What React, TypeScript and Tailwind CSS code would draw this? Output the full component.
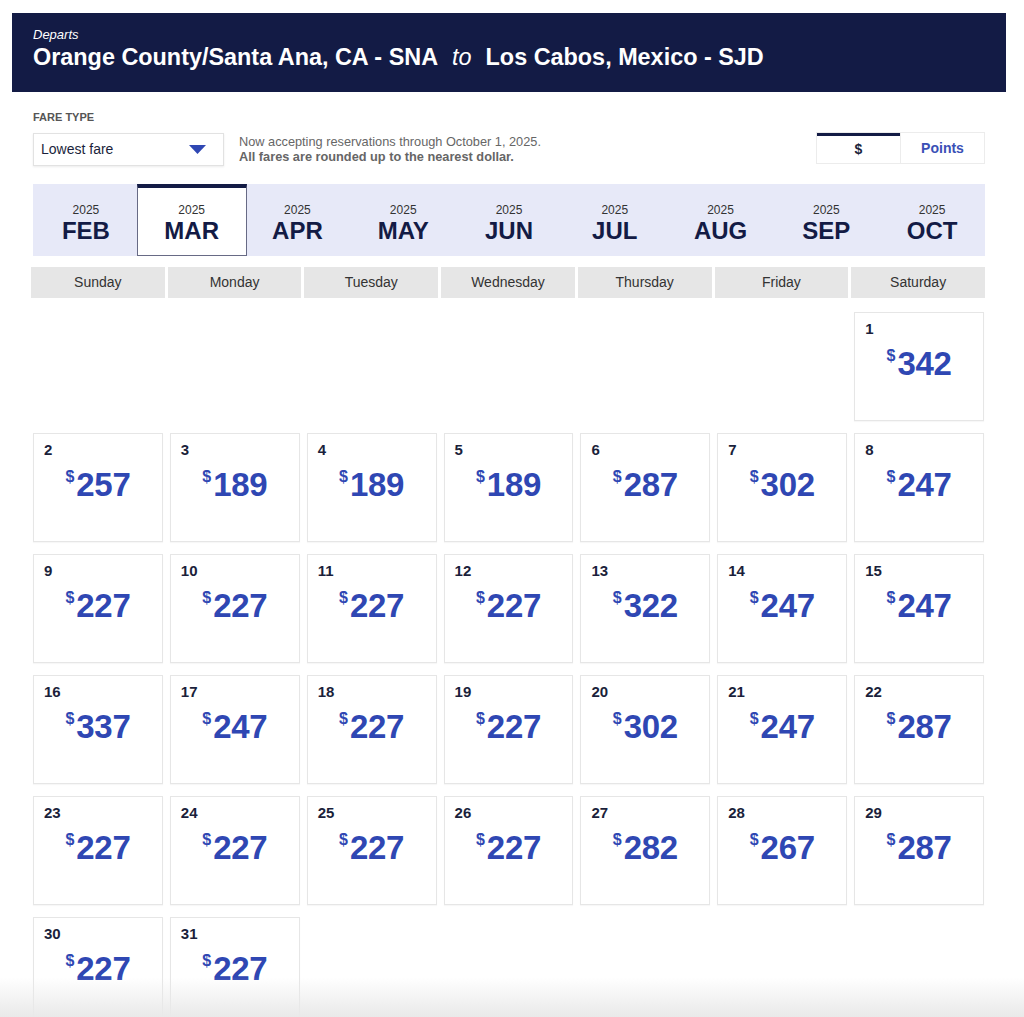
import React from "react";

const months = ["FEB", "MAR", "APR", "MAY", "JUN", "JUL", "AUG", "SEP", "OCT"];
const days = ["Sunday", "Monday", "Tuesday", "Wednesday", "Thursday", "Friday", "Saturday"];

// March 2025 fares, index = day - 1
const fares = [
  342, 257, 189, 189, 189, 287, 302, 247, 227, 227, 227, 227, 322, 247, 247, 337,
  247, 227, 227, 302, 247, 287, 227, 227, 227, 227, 282, 267, 287, 227, 227,
];

function DayCell({ day, fare }: { day: number; fare: number }) {
  return (
    <div className="h-[109px] border border-[#e6e6e6] bg-white shadow-[0_1px_1px_rgba(0,0,0,0.03)]">
      <div className="pl-[10px] pt-[6px] text-[15px] font-bold leading-[20px] text-[#1b1f3b]">{day}</div>
      <div className="mt-[8px] flex items-start justify-center text-[#2f47b3]">
        <span className="mt-[1px] mr-[2px] text-[16px] font-bold leading-none">$</span>
        <span className="text-[33px] font-bold leading-[34px] tracking-[-0.3px]">{fare}</span>
      </div>
    </div>
  );
}

export default function App() {
  const blanks = 6;
  return (
    <div
      className="relative h-[1017px] w-[1024px] overflow-hidden bg-white"
      style={{ fontFamily: '"Liberation Sans", Arial, sans-serif' }}
    >
      {/* route header */}
      <div className="ml-[12px] mt-[13px] h-[79px] w-[994px] bg-[#131b45] pl-[21px] pt-[14px] text-white">
        <div className="text-[13px] italic leading-[16px]">Departs</div>
        <div className="mt-[1px] text-[23.4px] font-bold leading-[26px]">
          Orange County/Santa Ana, CA - SNA
          <span className="mx-[14px] font-normal italic">to</span>
          Los Cabos, Mexico - SJD
        </div>
      </div>

      <div className="px-[33px] pt-[18px]">
        <div className="text-[11px] font-bold leading-[14px] text-[#555]">FARE TYPE</div>

        <div className="mt-[9px] flex items-start">
          <div className="flex h-[33px] w-[191px] items-center justify-between border border-[#e2e2e2] bg-white pl-[7px] pr-[17px] shadow-[0_1px_2px_rgba(0,0,0,0.08)]">
            <span className="text-[14px] text-[#1b1f3b]">Lowest fare</span>
            <svg width="17" height="9" viewBox="0 0 17 9">
              <polygon points="0,0 17,0 8.5,9" fill="#2f47b3" />
            </svg>
          </div>
          <div className="ml-[15px] mt-[1px] text-[12.75px] leading-[15px] text-[#666]">
            <div>Now accepting reservations through October 1, 2025.</div>
            <div className="font-bold">All fares are rounded up to the nearest dollar.</div>
          </div>
          <div className="ml-auto mr-[6px] -mt-[1px] flex h-[32px] w-[169px] border border-[#ececec]">
            <div className="flex flex-1 items-center justify-center border-t-[3px] border-[#131b45] pb-[1px] text-[14px] font-bold text-[#1b1f3b]">
              $
            </div>
            <div className="flex flex-1 items-center justify-center border-l border-[#ececec] text-[14px] font-bold text-[#3a50b6]">
              Points
            </div>
          </div>
        </div>

        {/* month tabs */}
        <div className="mt-[18px] grid h-[72px] w-[952px] grid-cols-9 bg-[#e7e9f8]">
          {months.map((m) => {
            const active = m === "MAR";
            return (
              <div
                key={m}
                className={
                  active
                    ? "-mx-[2px] flex flex-col items-center border-x border-b border-t-[4px] border-x-[#676a85] border-b-[#676a85] border-t-[#131b45] bg-white pt-[15px] text-[#131b45]"
                    : "flex flex-col items-center pt-[19px] text-[#131b45]"
                }
              >
                <span className="text-[12px] leading-[14px] text-[#333]">2025</span>
                <span className="text-[24px] font-bold leading-[28px]">{m}</span>
              </div>
            );
          })}
        </div>

        {/* weekday headers */}
        <div className="-ml-[2px] mt-[11px] grid w-[954px] grid-cols-7 gap-[3px]">
          {days.map((d) => (
            <div key={d} className="flex h-[31px] items-center justify-center bg-[#e6e6e6] text-[14px] text-[#333]">
              {d}
            </div>
          ))}
        </div>

        {/* calendar grid */}
        <div className="mt-[14px] grid w-[951px] grid-cols-7 gap-x-[7px] gap-y-[12px]">
          {Array.from({ length: blanks }).map((_, i) => (
            <div key={"b" + i} />
          ))}
          {fares.map((f, i) => (
            <DayCell key={i} day={i + 1} fare={f} />
          ))}
        </div>
      </div>

      {/* bottom fade */}
      <div className="pointer-events-none absolute bottom-0 left-0 h-[40px] w-full bg-gradient-to-b from-transparent to-[#e9e9e9]" />
    </div>
  );
}
